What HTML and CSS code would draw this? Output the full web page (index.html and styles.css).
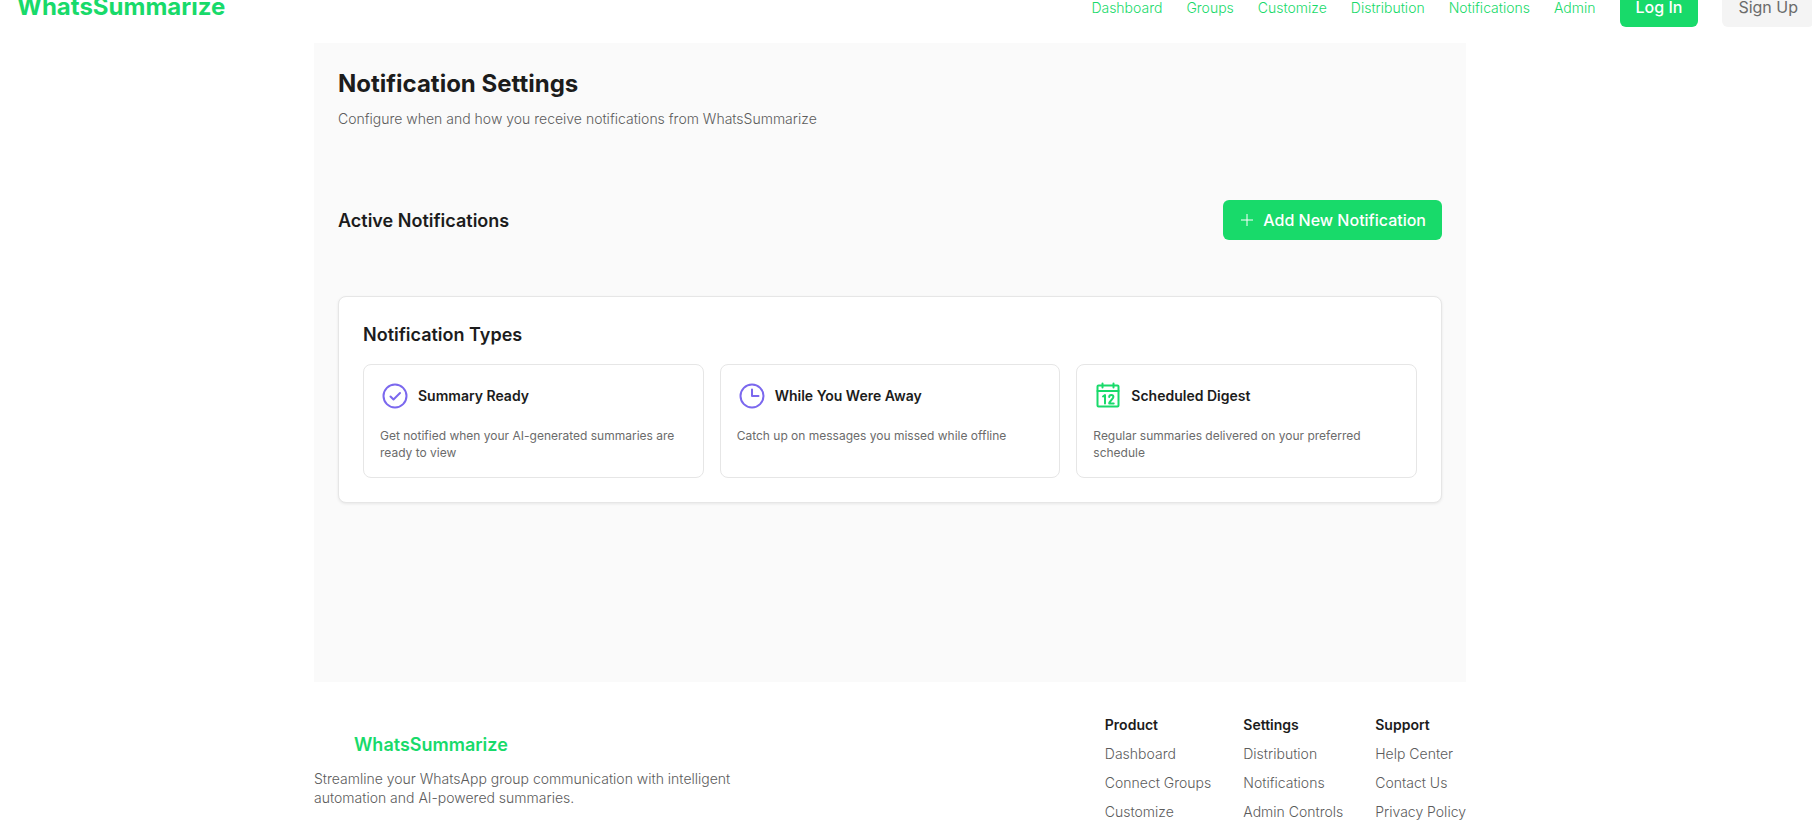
FILE: index.html
```html
<!DOCTYPE html>
<html lang="en">
<head>
<meta charset="utf-8">
<meta name="viewport" content="width=device-width, initial-scale=1">
<title>Notification Settings - WhatsSummarize</title>
<link rel="stylesheet" href="styles.css">
</head>
<body>
<header class="header">
  <a class="brand" href="#">WhatsSummarize</a>
  <nav class="nav" aria-label="Main">
    <a class="nav-link" href="#">Dashboard</a>
    <a class="nav-link" href="#">Groups</a>
    <a class="nav-link" href="#">Customize</a>
    <a class="nav-link" href="#">Distribution</a>
    <a class="nav-link" href="#">Notifications</a>
    <a class="nav-link" href="#">Admin</a>
    <button class="btn btn-primary" type="button">Log In</button>
    <button class="btn btn-neutral" type="button">Sign Up</button>
  </nav>
</header>

<main class="main">
  <h1 class="page-title">Notification Settings</h1>
  <p class="page-subtitle">Configure when and how you receive notifications from WhatsSummarize</p>

  <section class="active">
    <h2 class="section-title">Active Notifications</h2>
    <button class="btn btn-primary btn-add" type="button">
      <svg class="plus" viewBox="0 0 16 16" aria-hidden="true"><path d="M8 2v12M2 8h12"/></svg>
      Add New Notification
    </button>
  </section>

  <section class="panel">
    <h2 class="section-title">Notification Types</h2>
    <div class="types">
      <article class="type">
        <div class="type-head">
          <svg class="icon icon-violet" viewBox="0 0 30 30" aria-hidden="true"><circle cx="15" cy="15" r="11.5"/><path d="M10.500 15.500l3 3 6.500-6.500"/></svg>
          <h3 class="type-title">Summary Ready</h3>
        </div>
        <p class="type-text">Get notified when your AI-generated summaries are ready to view</p>
      </article>
      <article class="type">
        <div class="type-head">
          <svg class="icon icon-violet" viewBox="0 0 30 30" aria-hidden="true"><circle cx="15" cy="15" r="11.5"/><path d="M15 8.500v6.500h6.500"/></svg>
          <h3 class="type-title">While You Were Away</h3>
        </div>
        <p class="type-text">Catch up on messages you missed while offline</p>
      </article>
      <article class="type">
        <div class="type-head">
          <svg class="icon icon-green" viewBox="0 0 30 30" aria-hidden="true"><rect x="4.5" y="4.5" width="21" height="21" rx="1"/><path d="M4.5 10h21M9.5 2.500v4M20.500 2.500v4"/><path d="M10 15.500l2-1.500v8.500M16.200 16c0-2.700 4.200-2.700 4.200 0 0 2-4.200 4.200-4.200 6.500h4.500"/></svg>
          <h3 class="type-title">Scheduled Digest</h3>
        </div>
        <p class="type-text">Regular summaries delivered on your preferred schedule</p>
      </article>
    </div>
  </section>
</main>

<footer class="footer">
  <div class="about">
    <a class="footer-brand" href="#">WhatsSummarize</a>
    <p class="about-text">Streamline your WhatsApp group communication with intelligent automation and AI-powered summaries.</p>
  </div>
  <nav class="links" aria-label="Footer">
    <div class="column">
      <h3 class="column-title">Product</h3>
      <a href="#">Dashboard</a>
      <a href="#">Connect Groups</a>
      <a href="#">Customize</a>
    </div>
    <div class="column">
      <h3 class="column-title">Settings</h3>
      <a href="#">Distribution</a>
      <a href="#">Notifications</a>
      <a href="#">Admin Controls</a>
    </div>
    <div class="column">
      <h3 class="column-title">Support</h3>
      <a href="#">Help Center</a>
      <a href="#">Contact Us</a>
      <a href="#">Privacy Policy</a>
    </div>
  </nav>
</footer>
</body>
</html>
```
FILE: styles.css
```css
:root {
  --green: #18da6a;
  --violet: #7b68ee;
  --ink: #1c1c1c;
  --muted: #5c5c5c;
  --line: #e6e6e6;
}

* {
  box-sizing: border-box;
}

body {
  display: flex;
  flex-direction: column;
  margin: 0;
  padding-right: 32px;
  overflow-x: hidden;
  background: #fff;
  color: var(--ink);
  font-family: Inter, "Liberation Sans", sans-serif;
  font-size: 14px;
  font-weight: 300;
  line-height: 20px;
}

h1, h2, h3, p {
  margin: 0;
}

a {
  color: inherit;
  text-decoration: none;
}

/* The bar is tucked partly above the top of the page. */
.header {
  display: flex;
  align-items: center;
  justify-content: space-between;
  margin: -13px -34px 16px 17px;
}

.brand {
  color: var(--green);
  font-size: 24px;
  font-weight: 700;
  line-height: 32px;
}

.nav {
  display: flex;
  align-items: center;
  gap: 24px;
  color: var(--green);
}

.nav-link {
  padding-top: 2px;
}

.btn {
  height: 40px;
  padding: 0 16px;
  border: 0;
  border-radius: 6px;
  font: 500 16px Inter, "Liberation Sans", sans-serif;
  white-space: nowrap;
  cursor: pointer;
}

.btn-primary {
  background: var(--green);
  color: #fff;
}

.btn-neutral {
  background: #f4f4f4;
  color: #6b6b6b;
  font-weight: 400;
}

.btn-add {
  display: flex;
  align-items: center;
  gap: 8px;
}

.plus {
  width: 16px;
  height: 16px;
  fill: none;
  stroke: #fff;
  stroke-width: 1;
}

.main {
  width: 100%;
  max-width: 1152px;
  min-height: 639px;
  margin: 0 auto;
  padding: 24px;
  background: #fafafa;
}

.page-title {
  margin-bottom: 8px;
  font-size: 24px;
  font-weight: 700;
  line-height: 34px;
}

.page-subtitle {
  margin-bottom: 72px;
  color: var(--muted);
  line-height: 19px;
}

.active {
  display: flex;
  align-items: center;
  justify-content: space-between;
  margin-bottom: 56px;
}

.section-title {
  font-size: 18px;
  font-weight: 600;
  line-height: 27px;
}

.panel {
  padding: 24px;
  border: 1px solid var(--line);
  border-radius: 8px;
  background: #fff;
  box-shadow: 0 1px 3px rgba(0, 0, 0, 0.08);
}

.types {
  display: grid;
  grid-template-columns: repeat(3, 1fr);
  gap: 16px;
  margin-top: 16px;
}

.type {
  padding: 16px;
  border: 1px solid var(--line);
  border-radius: 8px;
}

.type-head {
  display: flex;
  align-items: center;
  gap: 8px;
  margin-bottom: 16px;
}

.icon {
  width: 30px;
  height: 30px;
  fill: none;
  stroke-width: 2;
  stroke-linecap: round;
  stroke-linejoin: round;
}

.icon-violet {
  stroke: var(--violet);
}

.icon-green {
  stroke: var(--green);
}

.type-title {
  font-size: 14px;
  font-weight: 600;
}

.type-text {
  color: #6b6b6b;
  font-size: 12px;
  font-weight: 400;
  line-height: 17px;
}

.footer {
  display: flex;
  justify-content: space-between;
  width: 100%;
  max-width: 1152px;
  margin: 0 auto;
  padding-top: 32px;
}

.about {
  max-width: 448px;
  padding-top: 16px;
}

.footer-brand {
  display: block;
  margin: 0 0 9px 40px;
  color: var(--green);
  font-size: 18px;
  font-weight: 600;
  line-height: 30px;
}

.about-text {
  color: var(--muted);
  line-height: 19px;
}

.links {
  display: flex;
  gap: 32px;
}

.column {
  display: flex;
  flex-direction: column;
  gap: 8px;
  color: var(--muted);
  line-height: 21px;
}

.column-title {
  color: var(--ink);
  font-size: 14px;
  font-weight: 600;
}
```
